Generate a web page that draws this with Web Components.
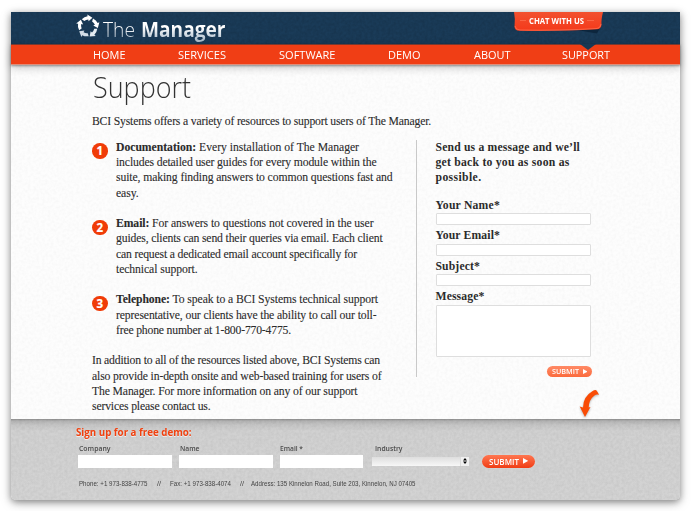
<!DOCTYPE html>
<html lang="en">
<head>
<meta charset="utf-8">
<title>The Manager – Support</title>
<style>
html,body{margin:0;background:#fff}
body{width:691px;height:511px;overflow:hidden}
</style>
</head>
<body>
<support-page></support-page>
<script>
const define = (name, html, setup) => customElements.define(name, class extends HTMLElement {
  connectedCallback() {
    if (this.shadowRoot) return;
    const attrs = this;
    this.attachShadow({mode: 'open'}).innerHTML = typeof html === 'function' ? html(attrs) : html;
    if (setup) setup(this);
  }
});

// One line of text set to an exact measure: by tracking, or by width with the "scale" attribute.
define('fit-text', `<style>
:host{display:block;white-space:nowrap}
span{display:inline-block;transform-origin:0 50%;white-space:pre}
:host([shaded]) span{background:linear-gradient(#fff 45%,#a9bac9 85%);-webkit-background-clip:text;background-clip:text;color:transparent}
</style><span><slot></slot></span>`, el => {
  const span = el.shadowRoot.querySelector('span');
  const w = parseFloat(el.getAttribute('w'));
  el.style.width = w + 'px';
  const natural = span.getBoundingClientRect().width;
  if (!natural) return;
  if (el.hasAttribute('scale')) span.style.transform = `scaleX(${w / natural})`;
  else span.style.letterSpacing = (w - natural) / el.textContent.length + 'px';
});

define('paper-grain', e => `<style>
:host{position:absolute;inset:0;pointer-events:none;opacity:${e.getAttribute('strength')}}
svg{display:block;width:100%;height:100%}
</style><svg><filter id="g" x="0" y="0" width="100%" height="100%"><feTurbulence type="fractalNoise" baseFrequency=".35" numOctaves="2" seed="4"/><feColorMatrix values="0 0 0 0 0  0 0 0 0 0  0 0 0 0 0  1.6 0 0 0 -.5"/></filter><rect width="100%" height="100%" filter="url(#g)"/></svg>`);

define('brand-logo', `<style>
:host{display:flex;position:relative;height:32px;padding-left:65px;color:#fff}
svg{width:24px;height:24px;margin-top:2px;flex:none}
.w{display:flex;gap:6px;margin-left:3px;font:20.5px/34px "Open Sans",sans-serif}
.t{font-weight:300}.m{font-weight:700}
</style>
<svg viewBox="0 0 24 24"><defs><path id="a" d="M5.800 5.300Q8.200 2.700 11.600 2.300L11.300 .4L16.400 3.700L12.600 7.300L12.300 5.400Q10 5.600 8.300 7.100Z"/></defs>
<g fill="#fff"><use href="#a"/><use href="#a" transform="rotate(72 12 12.6)"/><use href="#a" transform="rotate(144 12 12.6)" fill="#e4ebf1"/><use href="#a" transform="rotate(216 12 12.6)" fill="#d3dde6"/><use href="#a" transform="rotate(288 12 12.6)"/></g></svg>
<div class="w"><fit-text class="t" w="32" scale shaded>The</fit-text><fit-text class="m" w="84.500" scale shaded>Manager</fit-text></div>`);

define('chat-tab', `<style>
:host{position:absolute;left:502px;top:0;width:90px;height:23px;color:#fff;font:700 8.200px/17px "Open Sans",sans-serif}
svg{position:absolute;inset:0}
fit-text{position:relative;margin-left:16px}
</style>
<svg width="90" height="23"><defs><linearGradient id="c" x2="0" y2="1"><stop stop-color="#f2512f"/><stop offset="1" stop-color="#f4391a"/></linearGradient></defs>
<path d="M64 18L88 14L84 21.5Z" fill="#0d263d"/>
<path d="M1 0H90Q88 8 88.500 13Q88 17 84 17.300Q48 19.500 6 18.800Q2 18.500 1.500 15Q2.500 7 1 0Z" fill="url(#c)"/><path d="M2 14Q2.600 18 7 18Q48 18.800 84 16.500Q87.500 16 88 12" fill="none" stroke="#ff8163" stroke-width=".6"/>
<path d="M7 8.500H13M74 8.500H81" stroke="#ff7a5a" stroke-width=".6"/></svg>
<fit-text w="55" scale>CHAT WITH US</fit-text>`);

define('nav-bar', `<style>
:host{display:block;position:relative;height:20.500px;background:#f03e15;border-top:1px solid #77382f;box-sizing:border-box;border-bottom:1px solid #df8d7a;box-shadow:0 1px 2px rgba(0,0,0,.35),0 3px 8px rgba(0,0,0,.2);color:#fff;font:11.6px/20px "Open Sans",sans-serif;padding-left:82px}
nav{display:flex}
i{position:absolute;left:569px;top:-1px;width:16px;height:6px;background:#183853;clip-path:polygon(0 0,100% 0,50% 100%)}
</style><nav><fit-text w="32.500" scale>HOME</fit-text><fit-text w="48" scale style="margin-left:52.500px">SERVICES</fit-text><fit-text w="56.500" scale style="margin-left:52.500px">SOFTWARE</fit-text><fit-text w="32.500" scale style="margin-left:53px">DEMO</fit-text><fit-text w="36.500" scale style="margin-left:53px">ABOUT</fit-text><fit-text w="48" scale style="margin-left:52px">SUPPORT</fit-text></nav><i></i>`);

define('numbered-item', e => `<style>
:host{display:grid;grid-template-columns:24px 1fr;margin-bottom:15.25px}
b{width:15.500px;height:15.500px;margin-top:3.500px;border-radius:50%;background:#f03c08;color:#fff;font:700 11.500px/15.500px "Open Sans",sans-serif;text-align:center;-webkit-text-stroke:.2px #fff}
</style><b>${e.getAttribute('n')}</b><div><slot></slot></div>`);

define('submit-button', `<style>
:host{display:flex;align-items:center;justify-content:center;gap:4px;box-sizing:border-box;color:#fff;border-radius:9px;font-family:"Open Sans",sans-serif;font-weight:600;-webkit-text-stroke:0;
background:linear-gradient(var(--top,#ff8a66),var(--bottom,#fb6b3d))}
svg{width:.65em;height:.7em;flex:none}
</style><slot></slot><svg viewBox="0 0 6 6" preserveAspectRatio="none"><path d="M0 0L6 3L0 6Z" fill="#fff"/></svg>`);

define('form-field', e => `<style>
:host{display:block;height:${e.getAttribute('tall') ? 68 : 30.5}px}
label{display:block;height:15.500px;font-weight:700;line-height:15px}
input,textarea{display:block;box-sizing:border-box;width:155px;height:${e.getAttribute('tall') || 12}px;margin:0;padding:0;border:1px solid #dedede;border-radius:1px;background:#fff;resize:none;outline:0}
</style><label><fit-text w="${e.getAttribute('w')}">${e.getAttribute('label')}</fit-text></label>${e.getAttribute('tall') ? '<textarea></textarea>' : '<input>'}`);

define('message-form', `<style>
:host{display:block;box-sizing:border-box;width:176px;height:237px;border-left:1px solid #c9c9c9;padding-left:18.500px;font-weight:700;-webkit-text-stroke:0}
.f{margin-top:12.400px}
submit-button{width:45px;height:10.500px;margin:9px 0 0 111.500px;font-size:7.200px}
</style>
<fit-text w="144.500">Send us a message and we’ll</fit-text><fit-text w="134">get back to you as soon as</fit-text><fit-text w="46">possible.</fit-text>
<div class="f"><form-field label="Your Name*" w="64.500"></form-field><form-field label="Your Email*" w="64.500"></form-field><form-field label="Subject*" w="44.500"></form-field><form-field label="Message*" w="49" tall="52"></form-field></div>
<submit-button><fit-text w="27" scale>SUBMIT</fit-text></submit-button>`);

define('support-content', `<style>
:host{display:block;position:relative;box-sizing:border-box;padding:4px 0 0 81px;color:#2b2b2b;font:11.700px/15.250px "Liberation Serif",serif;-webkit-text-stroke:.1px #2b2b2b}
h1{margin:0 0 0 .500px;height:45.300px;font:300 30px/36px "Open Sans",sans-serif;-webkit-text-stroke:0;color:#333}
.cols{display:flex;margin-top:10.800px}
.left{width:324px}
</style>
<h1><fit-text w="98" scale>Support</fit-text></h1>
<fit-text w="339">BCI Systems offers a variety of resources to support users of The Manager.</fit-text>
<div class="cols"><div class="left">
<numbered-item n="1"><fit-text w="243"><b>Documentation:</b> Every installation of The Manager</fit-text><fit-text w="260.500">includes detailed user guides for every module within the</fit-text><fit-text w="276.500">suite, making finding answers to common questions fast and</fit-text><fit-text w="22.500">easy.</fit-text></numbered-item>
<numbered-item n="2"><fit-text w="257.500"><b>Email:</b> For answers to questions not covered in the user</fit-text><fit-text w="266.500">guides, clients can send their queries via email. Each client</fit-text><fit-text w="241">can request a dedicated email account specifically for</fit-text><fit-text w="81.500">technical support.</fit-text></numbered-item>
<numbered-item n="3"><fit-text w="262"><b>Telephone:</b> To speak to a BCI Systems technical support</fit-text><fit-text w="260.500">representative, our clients have the ability to call our toll-</fit-text><fit-text w="175">free phone number at 1-800-770-4775.</fit-text></numbered-item>
<fit-text w="288">In addition to all of the resources listed above, BCI Systems can</fit-text><fit-text w="289.500">also provide in-depth onsite and web-based training for users of</fit-text><fit-text w="265.500">The Manager. For more information on any of our support</fit-text><fit-text w="118.500">services please contact us.</fit-text>
</div><message-form></message-form></div>`);

define('curved-arrow', `<style>:host{position:absolute;left:567px;top:376px}svg{display:block;filter:drop-shadow(0 1px 1px rgba(0,0,0,.3))}</style>
<svg width="24" height="30"><path d="M14 3.500Q17 1.600 18.300 2.300Q20 4.300 21 6.800Q18.500 5.800 16.500 7.500Q11 11.500 10.700 19.500L12.500 19L7 29L1.700 18.500L5 19.500Q5.200 8.500 14 3.500Z" fill="#f94c06"/></svg>`);

define('demo-field', e => `<style>
:host{display:block;width:${e.getAttribute('width')}px}
label{display:block;height:11px;color:#4b4b4b;font:600 7.500px/8px "Open Sans",sans-serif;padding-left:.5px;box-sizing:border-box}
.p{padding-left:3px}
input{display:block;width:100%;height:12.500px;box-sizing:border-box;border:0;background:#fff;margin:0;padding:0;outline:0}
.s{display:flex;justify-content:flex-end;height:8.500px;margin-top:2px;background:linear-gradient(#dedede,#f7f7f7)}
.s span{width:8px;background:#f0f0f0;display:flex;justify-content:center;align-items:center;border-left:1px solid #ddd}
</style><label class="${e.hasAttribute('select') ? 'p' : ''}"><fit-text scale w="${e.getAttribute('w')}">${e.getAttribute('label')}</fit-text></label>${e.hasAttribute('select') ? '<div class="s"><span><svg width="4" height="6"><path d="M2 0L4 2.500H0ZM2 6L4 3.500H0Z"/></svg></span></div>' : '<input>'}`);

define('demo-footer', `<style>
:host{display:block;position:relative;height:81px;box-sizing:border-box;background:linear-gradient(#8c8c8c,#b3b3b3 2px,#c6c6c6 6px,#d1d1d1 12px,#d3d3d3);border-radius:0 0 5px 5px;padding:6px 0 0 65px}
h2,.r,.c{position:relative}
h2{margin:0;height:19px;color:#f0410f;font:700 10.800px/14px "Open Sans",sans-serif;text-shadow:0 1px 0 #eee}
.r{display:flex;padding-left:2px;height:29px}
submit-button{--top:#ff7650;--bottom:#f03d15;width:53px;height:12.500px;margin:11px 0 0 13px;font-size:8.300px;box-shadow:0 0 1px #eee}
.c{display:flex;padding-left:3px;color:#444;font:6.300px/11px "Liberation Sans",sans-serif;margin-top:5px}
</style>
<paper-grain strength=".05"></paper-grain>
<h2><fit-text w="115.500" scale>Sign up for a free demo:</fit-text></h2>
<div class="r"><demo-field width="94" w="31.500" label="Company"></demo-field><demo-field style="margin-left:7px" width="93.500" w="19.500" label="Name"></demo-field><demo-field style="margin-left:7px" width="83" w="23" label="Email *"></demo-field><demo-field style="margin-left:9.500px" width="97" w="27.500" label="Industry" select></demo-field><submit-button><fit-text w="30" scale>SUBMIT</fit-text></submit-button></div>
<div class="c"><fit-text w="68.500" scale>Phone: +1 973-838-4775</fit-text><fit-text w="4" scale style="margin-left:9.500px">//</fit-text><fit-text w="61" scale style="margin-left:8.500px">Fax: +1 973-838-4074</fit-text><fit-text w="4" scale style="margin-left:9.500px">//</fit-text><fit-text w="164.500" scale style="margin-left:6.500px">Address: 135 Kinnelon Road, Suite 203, Kinnelon, NJ 07405</fit-text></div>`);

define('support-page', `<style>
:host{display:block;box-sizing:border-box;padding:12px 11px}
main{position:relative;width:669px;height:488px;background:#fdfdfd;border-radius:0 0 5px 5px;box-shadow:0 2px 7px rgba(0,0,0,.42),0 3px 13px rgba(0,0,0,.15)}
header{position:relative;background:#1a3b58;height:32px}
nav-bar{z-index:2}
</style><main><paper-grain strength=".022"></paper-grain>
<header><paper-grain strength=".12"></paper-grain><brand-logo></brand-logo><chat-tab></chat-tab></header>
<nav-bar></nav-bar>
<support-content style="height:354.500px"></support-content>
<curved-arrow></curved-arrow>
<demo-footer></demo-footer></main>`);
</script>
</body>
</html>
